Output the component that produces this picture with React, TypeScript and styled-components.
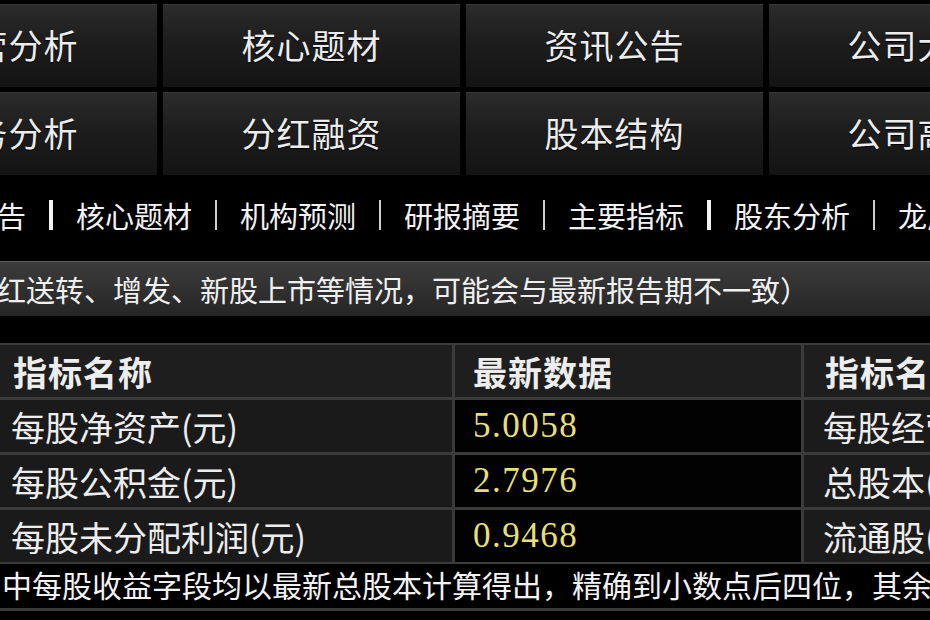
import React from "react";
import styled, { createGlobalStyle } from "styled-components";

const GlobalStyle = createGlobalStyle`
    html, body {
        margin: 0;
        padding: 0;
        background: #000;
    }
    body {
        font-family: "Noto Sans CJK SC", "Noto Sans", sans-serif;
        color: #eee;
    }
`;

const Page = styled.div`
    width: 930px;
    height: 620px;
    overflow: hidden;
    background: #000;
    display: flex;
    flex-direction: column;
`;

const NavGrid = styled.div`
    display: grid;
    grid-template-columns: repeat(4, 297px);
    grid-auto-rows: 83px;
    column-gap: 6px;
    row-gap: 5px;
    padding-top: 4px;
    margin-left: -140px;
`;

const NavButton = styled.div`
    display: flex;
    align-items: center;
    justify-content: center;
    padding-bottom: 3px;
    background: linear-gradient(#2c2c2c, #1d1d1d 45%, #141414);
    box-shadow: inset 0 1px 0 #3a3a3a;
    color: #ececec;
    font-size: 34px;
    letter-spacing: 1px;
    text-shadow: 0 1px 1px #000;
    white-space: nowrap;
    cursor: pointer;
`;

const LinkBar = styled.div`
    height: 86px;
    padding-bottom: 6px;
    box-sizing: border-box;
    display: flex;
    align-items: center;
    gap: 23px;
    margin-left: -90px;
    white-space: nowrap;
`;

const LinkItem = styled.span`
    font-size: 29px;
    color: #f2f2f2;
    line-height: 1;
    flex-shrink: 0;
`;

const Divider = styled.span<{ bold?: boolean }>`
    width: ${props => (props.bold ? "4px" : "2px")};
    height: 30px;
    background: ${props => (props.bold ? "#f4f4f4" : "#cfcfcf")};
    flex-shrink: 0;
`;

const Notice = styled.div`
    height: 54px;
    border-top: 1px solid #5a5a5a;
    background: linear-gradient(#3c3c3c, #2e2e2e 60%, #262626);
    display: flex;
    align-items: center;
    margin-left: -3px;
    font-size: 29px;
    color: #f0f0f0;
    white-space: nowrap;
`;

const Table = styled.div`
    margin-top: 27px;
    margin-left: -4px;
    display: grid;
    grid-template-columns: 454px 346px 200px;
    grid-auto-rows: 52px;
    gap: 3px;
    padding: 2px;
    background: #3b3b3b;
`;

type CellKind = "head" | "label" | "value" | "side";

const cellBg: Record<CellKind, string> = {
    head: "#1e1e1e",
    label: "#1a1a1a",
    value: "#020202",
    side: "#1b1b1b",
};

const Cell = styled.div<{ kind: CellKind; pad: number }>`
    display: flex;
    align-items: center;
    padding-left: ${props => props.pad}px;
    background: ${props => cellBg[props.kind]};
    white-space: nowrap;
    overflow: hidden;
    font-size: 34px;
    font-weight: ${props => (props.kind === "head" ? 700 : 400)};
    letter-spacing: ${props => (props.kind === "head" ? "1px" : "0")};
    color: #ededed;
`;

const Value = styled.span`
    font-family: "Liberation Serif", "DejaVu Serif", serif;
    font-size: 35px;
    letter-spacing: 1.5px;
    color: #e8df78;
`;

const Footnote = styled.div`
    height: 44px;
    display: flex;
    align-items: center;
    padding-left: 2px;
    padding-bottom: 4px;
    box-sizing: border-box;
    font-size: 30px;
    color: #f2f2f2;
    white-space: nowrap;
`;

const BottomRule = styled.div`
    height: 3px;
    background: #3a3a3a;
`;

const navItems = [
    "经营分析",
    "核心题材",
    "资讯公告",
    "公司大事",
    "财务分析",
    "分红融资",
    "股本结构",
    "公司高管",
];

const links = [
    "公司公告",
    "核心题材",
    "机构预测",
    "研报摘要",
    "主要指标",
    "股东分析",
    "龙虎榜单",
];

const rows = [
    { name: "每股净资产(元)", value: "5.0058", side: "每股经营现金流(元)" },
    { name: "每股公积金(元)", value: "2.7976", side: "总股本(亿股)" },
    { name: "每股未分配利润(元)", value: "0.9468", side: "流通股(亿股)" },
];

const App = () => {
    return (
        <Page>
            <GlobalStyle />
            <NavGrid>
                {navItems.map(item => (
                    <NavButton key={item}>{item}</NavButton>
                ))}
            </NavGrid>
            <LinkBar>
                {links.map((link, i) => (
                    <React.Fragment key={link}>
                        {i > 0 ? <Divider bold={i === 1 || i === 5} /> : null}
                        <LinkItem>{link}</LinkItem>
                    </React.Fragment>
                ))}
            </LinkBar>
            <Notice>
                红送转、增发、新股上市等情况，可能会与最新报告期不一致）
            </Notice>
            <Table>
                <Cell kind="head" pad={15}>指标名称</Cell>
                <Cell kind="head" pad={18}>最新数据</Cell>
                <Cell kind="head" pad={21}>指标名称</Cell>
                {rows.map(row => (
                    <React.Fragment key={row.name}>
                        <Cell kind="label" pad={13}>{row.name}</Cell>
                        <Cell kind="value" pad={18}>
                            <Value>{row.value}</Value>
                        </Cell>
                        <Cell kind="side" pad={19}>{row.side}</Cell>
                    </React.Fragment>
                ))}
            </Table>
            <Footnote>
                中每股收益字段均以最新总股本计算得出，精确到小数点后四位，其余均以报告期股本计算
            </Footnote>
            <BottomRule />
        </Page>
    );
};

export default App;
